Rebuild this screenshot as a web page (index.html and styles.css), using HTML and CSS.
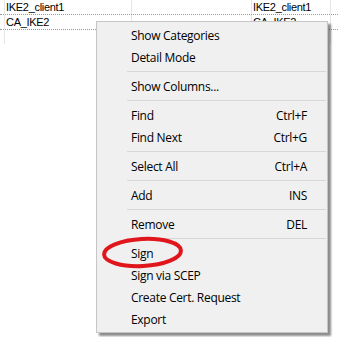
FILE: index.html
```html
<!DOCTYPE html>
<html>
<head>
<meta charset="utf-8">
<link rel="stylesheet" href="styles.css">
</head>
<body>
<div class="grid">
  <div class="row">
    <div class="cell c0"></div>
    <div class="cell c1">IKE2_client1</div>
    <div class="cell c2"></div>
    <div class="cell c3">IKE2_client1</div>
    <div class="cell c4"></div>
  </div>
  <div class="row">
    <div class="cell c0"></div>
    <div class="cell c1">CA_IKE2</div>
    <div class="cell c2"></div>
    <div class="cell c3">CA_IKE2</div>
    <div class="cell c4"></div>
  </div>
  <div class="row blank">
    <div class="cell c0"></div>
    <div class="cell c1"></div>
    <div class="cell c2"></div>
    <div class="cell c3"></div>
    <div class="cell c4"></div>
  </div>
</div>

<div class="menu">
  <div class="item"><span>Show Categories</span></div>
  <div class="item"><span>Detail Mode</span></div>
  <div class="sep"></div>
  <div class="item"><span>Show Columns...</span></div>
  <div class="sep"></div>
  <div class="item"><span>Find</span><span class="key">Ctrl+F</span></div>
  <div class="item"><span>Find Next</span><span class="key">Ctrl+G</span></div>
  <div class="sep"></div>
  <div class="item"><span>Select All</span><span class="key">Ctrl+A</span></div>
  <div class="sep"></div>
  <div class="item"><span>Add</span><span class="key">INS</span></div>
  <div class="sep"></div>
  <div class="item"><span>Remove</span><span class="key">DEL</span></div>
  <div class="sep"></div>
  <div class="item"><span>Sign</span></div>
  <div class="item"><span>Sign via SCEP</span></div>
  <div class="item"><span>Create Cert. Request</span></div>
  <div class="item"><span>Export</span></div>
</div>

<svg class="mark" width="338" height="337" viewBox="0 0 338 337">
  <ellipse cx="142.5" cy="252.5" rx="38.5" ry="13.5" fill="none" stroke="#e1151c" stroke-width="4" transform="rotate(-3 142.5 252.5)"/>
</svg>
</body>
</html>
```

FILE: styles.css
```css
html, body {
  margin: 0;
  padding: 0;
  background: #ffffff;
  width: 338px;
  height: 337px;
  overflow: hidden;
}

.grid {
  display: flex;
  flex-direction: column;
  font-family: "Liberation Sans", Arial, sans-serif;
  font-size: 11px;
  letter-spacing: -0.3px;
  color: #000;
}

.row {
  display: flex;
  height: 14px;
  border-bottom: 1px dotted #9a9a9a;
}

.row.blank {
  border-bottom: none;
}

.cell {
  box-sizing: border-box;
  height: 14px;
  line-height: 14px;
  padding-left: 1px;
  white-space: nowrap;
  overflow: hidden;
  border-right: 1px solid #e6e6e6;
}

.c0 { width: 5px; padding: 0; }
.c1 { width: 127px; }
.c2 { width: 120px; }
.c3 { width: 79px; }
.c4 { flex: 1; border-right: none; }

.menu {
  position: absolute;
  left: 96px;
  top: 21px;
  width: 230px;
  box-sizing: content-box;
  padding: 2px 0;
  background: #f0f0f0;
  border: 1px solid #c6c6c6;
  box-shadow: 3px 3px 2px rgba(0, 0, 0, 0.45);
  font-family: "Open Sans", "Noto Sans", sans-serif;
  font-size: 12px;
  letter-spacing: -0.3px;
  color: #000;
}

.item {
  display: flex;
  justify-content: space-between;
  align-items: center;
  height: 22px;
  padding: 0 20px 0 34px;
  white-space: nowrap;
}

.sep {
  height: 1px;
  background: #d7d7d7;
  margin: 3px 1px 3px 30px;
}

.mark {
  position: absolute;
  left: 0;
  top: 0;
  pointer-events: none;
}
```
